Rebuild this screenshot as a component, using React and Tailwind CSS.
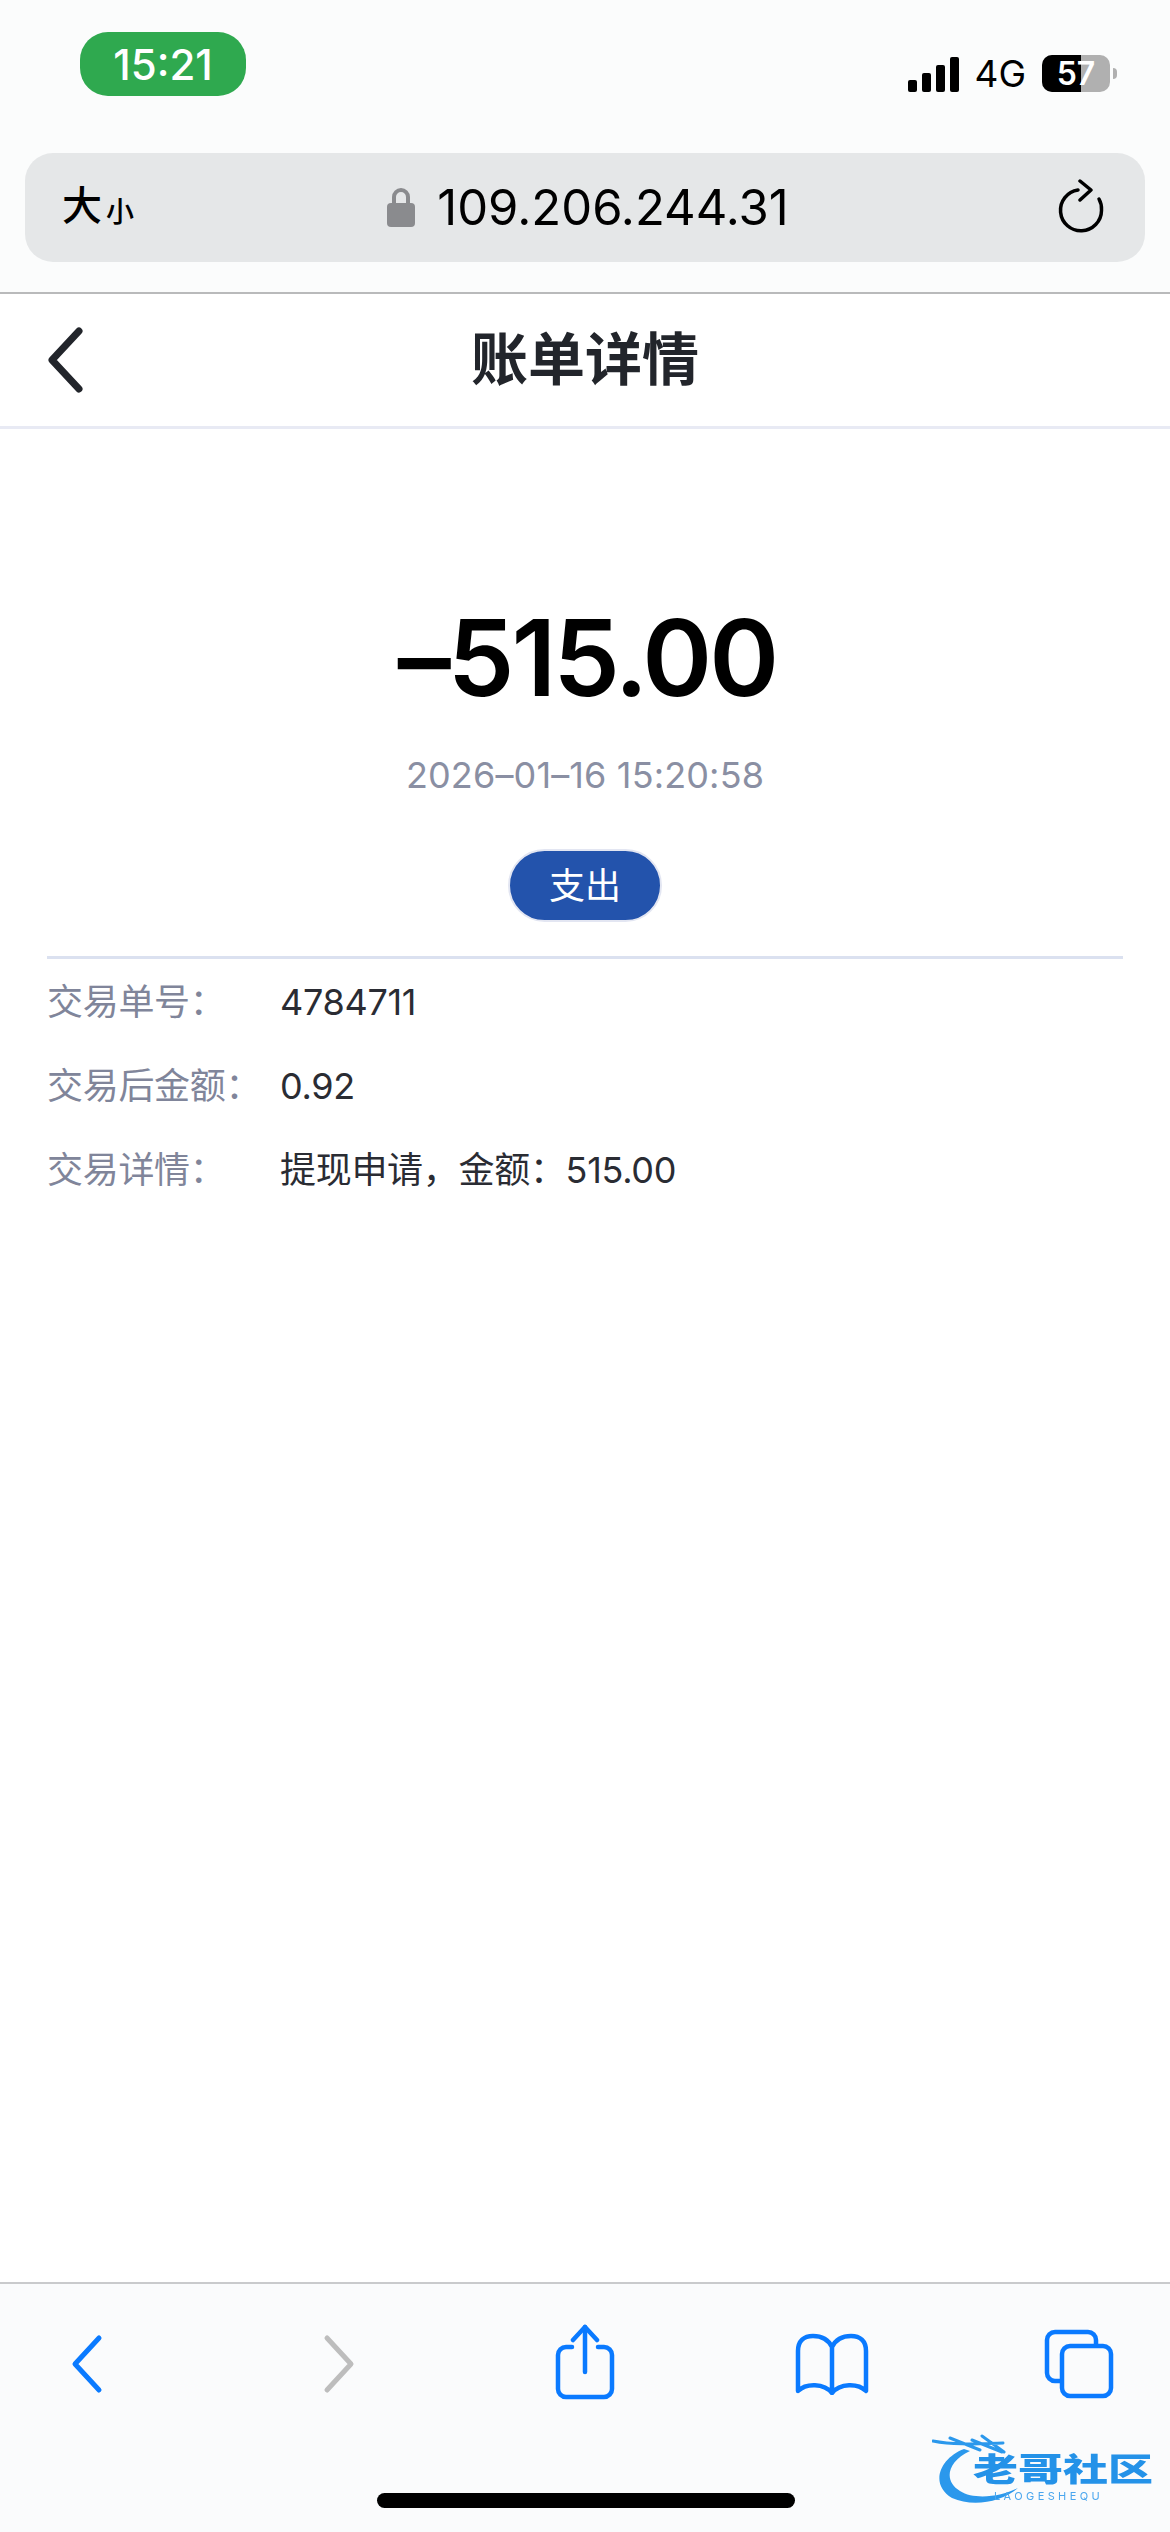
import React from "react";

const rows = [
  { label: "交易单号：", value: "4784711" },
  { label: "交易后金额：", value: "0.92" },
  { label: "交易详情：", value: "提现申请，金额：515.00" },
];

const StatusBar = () => (
  <div className="flex h-[153px] items-start justify-between pl-[80px] pr-[53px]">
    <div className="mt-[32px] flex h-[64px] w-[166px] items-center justify-center rounded-[28px] bg-[#2fa94f] text-[42px] font-medium text-white">
      15:21
    </div>
    <div className="mt-[55px] flex items-center">
      <div className="flex h-[37px] items-end gap-[5px]">
        <div className="h-[12px] w-[9px] rounded-[2px] bg-black"></div>
        <div className="h-[19px] w-[9px] rounded-[2px] bg-black"></div>
        <div className="h-[27px] w-[9px] rounded-[2px] bg-black"></div>
        <div className="h-[35px] w-[9px] rounded-[2px] bg-black"></div>
      </div>
      <span className="ml-[15px] text-[37px] leading-[37px] text-black">4G</span>
      <div className="relative ml-[16px] h-[37px] w-[68px] overflow-hidden rounded-[10px] bg-[#b0b0b0]">
        <div className="h-full w-[39px] bg-black"></div>
        <span className="absolute inset-0 flex items-center justify-center text-[32px] font-semibold text-white">57</span>
      </div>
      <div className="ml-[3px] h-[11px] w-[4px] rounded-r-full bg-[#b0b0b0]"></div>
    </div>
  </div>
);

const AddressBar = () => (
  <div className="px-[25px]">
    <div className="relative flex h-[109px] items-center justify-center rounded-[28px] bg-[#e5e7e8]">
      <div className="absolute left-[37px] top-[31px] flex items-end text-black">
        <span className="text-[40px] font-medium leading-[44px]">大</span>
        <span className="ml-[4px] text-[28px] font-medium leading-[32px]">小</span>
      </div>
      <svg width="28" height="39" viewBox="0 0 28 39" className="ml-[6px] mr-[22px]">
        <path d="M7 17V9a7 7 0 0 1 14 0v8" fill="none" stroke="#8a8b8e" strokeWidth="4" />
        <rect x="0" y="15" width="28" height="24" rx="4" fill="#8a8b8e" />
      </svg>
      <span className="text-[49px] leading-[60px] text-black">109.206.244.31</span>
      <svg width="46" height="54" viewBox="0 0 46 54" className="absolute right-[41px] top-[26px]" fill="none" stroke="#000" strokeWidth="3.5" strokeLinecap="round" strokeLinejoin="round">
        <path d="M20 11A20.5 20.5 0 1 0 43.5 31.5 20 20 0 0 0 41 20" />
        <path d="M22 2l11 9-11 10" />
      </svg>
    </div>
  </div>
);

const NavHeader = () => (
  <div className="relative flex h-[137px] items-center justify-center border-b-[3px] border-t-[2px] border-t-[#b9babb] border-b-[#e8eaf4] bg-white">
    <svg width="40" height="66" viewBox="0 0 40 66" className="absolute left-[46px] top-[33px]" fill="none" stroke="#22252b" strokeWidth="7" strokeLinecap="round" strokeLinejoin="round">
      <path d="M33 4L6 33l27 29" />
    </svg>
    <span className="text-[57px] font-semibold leading-[70px] text-[#22252b]">账单详情</span>
  </div>
);

const Toolbar = () => (
  <div className="relative h-[250px] border-t-[2px] border-[#c9cacc] bg-[#fafbfc]">
    <div className="flex items-start pl-[68px] pt-[40px]">
      <svg width="36" height="60" viewBox="0 0 36 60" className="mt-[10px] shrink-0" fill="none" stroke="#0a7aff" strokeWidth="5" strokeLinecap="round" strokeLinejoin="round">
        <path d="M31 4L7 30l24 26" />
      </svg>
      <svg width="36" height="60" viewBox="0 0 36 60" className="ml-[218px] mt-[10px] shrink-0" fill="none" stroke="#bdbdbd" strokeWidth="5" strokeLinecap="round" strokeLinejoin="round">
        <path d="M5 4l24 26L5 56" />
      </svg>
      <svg width="60" height="76" viewBox="0 0 60 76" className="ml-[197px] shrink-0" fill="none" stroke="#0a7aff" strokeWidth="4.5" strokeLinecap="round" strokeLinejoin="round">
        <path d="M17 23H11a8 8 0 0 0-8 8v34a8 8 0 0 0 8 8h38a8 8 0 0 0 8-8V31a8 8 0 0 0-8-8h-6" />
        <path d="M30 48V3" />
        <path d="M18 16L30 3l12 13" />
      </svg>
      <svg width="74" height="62" viewBox="0 0 74 62" className="ml-[180px] mt-[9px] shrink-0" fill="none" stroke="#0a7aff" strokeWidth="4.5" strokeLinecap="round" strokeLinejoin="round">
        <path d="M37 14C33 6 26 3 18 3 9 3 3 8 3 18v40c8-8 26-8 34 2 8-10 26-10 34-2V18C71 8 65 3 56 3 48 3 41 6 37 14v46" />
      </svg>
      <svg width="70" height="70" viewBox="0 0 70 70" className="ml-[175px] mt-[5px] shrink-0" fill="none" stroke="#0a7aff" strokeWidth="4.5" strokeLinejoin="round">
        <path d="M16 52H11a8 8 0 0 1-8-8V11a8 8 0 0 1 8-8h33a8 8 0 0 1 8 8v5" />
        <rect x="18" y="17" width="49" height="50" rx="8" />
      </svg>
    </div>
    <div className="absolute bottom-[24px] left-[377px] h-[15px] w-[418px] rounded-full bg-black"></div>
    {/* watermark */}
    <div className="absolute left-[932px] top-[148px] h-[74px] w-[222px] blur-[0.6px]">
      <svg width="110" height="74" viewBox="0 0 110 74" className="absolute left-0 top-0" fill="none" strokeLinecap="round">
        <path d="M32 17C8 26-3 52 20 66c20 9 48 5 66-10-18 9-44 12-58 3C12 50 14 30 38 19z" fill="#2b98ec" />
        <path d="M1 9c20 4 40 3 70 2M18 6l30 12M40 8l30 12M50 4l22 16" stroke="#2b98ec" strokeWidth="3" />
      </svg>
      <span className="absolute left-[41px] top-[20px] origin-top-left scale-y-[0.72] text-[45px] font-black leading-[48px] whitespace-nowrap text-[#2492e8]">老哥社区</span>
      <span className="absolute left-[62px] top-[57px] text-[11px] leading-[14px] tracking-[3.4px] whitespace-nowrap text-[#4aa6ee]">LAOGESHEQU</span>
    </div>
  </div>
);

const App = () => {
  return (
    <div className="flex h-[2532px] w-full flex-col bg-[#fbfcfc] font-['Inter','Noto_Sans_CJK_SC',sans-serif]">
      <StatusBar />
      <AddressBar />
      <div className="h-[30px]"></div>
      <NavHeader />
      <main className="flex-1 bg-white px-[47px]">
        <div className="flex flex-col items-center">
          <div className="ml-[4px] mt-[165px] text-[106px] font-semibold leading-[128px] tracking-[-3px] text-black">–515.00</div>
          <div className="mt-[31px] text-[36px] leading-[44px] tracking-[0.14px] text-[#8a8fa3]">2026–01–16 15:20:58</div>
          <div className="mt-[52px] flex h-[73px] w-[154px] items-center justify-center rounded-full border-[2px] border-[#e3e6f2] bg-[#2353ac] text-[36px] text-white">
            支出
          </div>
        </div>
        <div className="mt-[34px] border-t-[3px] border-[#dbe1f0] pt-[1px]">
          {rows.map((row) => (
            <div key={row.label} className="flex h-[84px] items-center text-[36px] tracking-[-0.3px]">
              <span className="w-[233px] text-[#80859a]">{row.label}</span>
              <span className="text-[#2a2c33]">{row.value}</span>
            </div>
          ))}
        </div>
      </main>
      <Toolbar />
    </div>
  );
};

export default App;
